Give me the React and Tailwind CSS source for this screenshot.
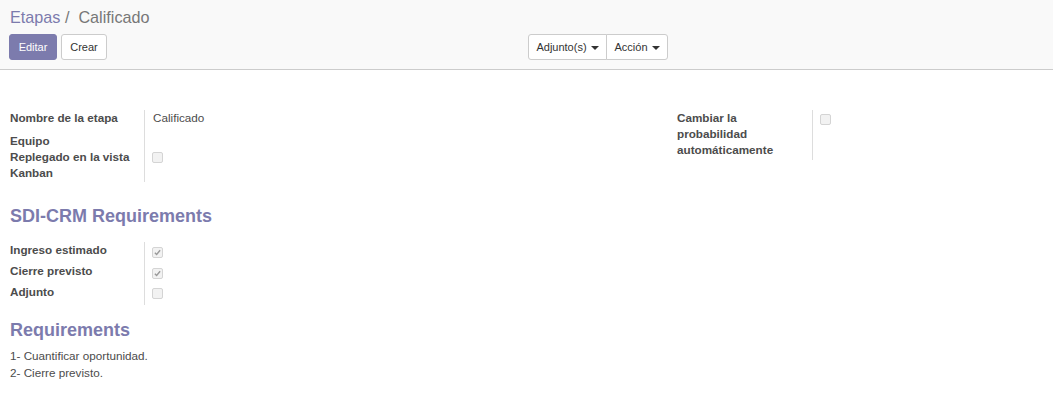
import React from "react";

const font = { fontFamily: '"Liberation Sans", Arial, sans-serif' };

function Check({ checked }) {
  return (
    <span className="inline-flex items-center justify-center w-[11px] h-[11px] rounded-[2px] border border-[#d4d4d4] bg-[#f2f2f2]">
      {checked && (
        <svg width="7" height="7" viewBox="0 0 8 8">
          <path d="M1 4.2 L3 6.2 L7 1.5" fill="none" stroke="#9a9a9a" strokeWidth="1.6" />
        </svg>
      )}
    </span>
  );
}

function Caret() {
  return <span className="inline-block ml-[4px] align-middle border-t-[4px] border-t-current border-x-[4px] border-x-transparent" />;
}

export default function App() {
  return (
    <div className="min-h-screen bg-white text-[#4c4c4c] text-[11.7px]" style={font}>
      {/* control panel */}
      <div className="bg-[#f9f9f9] border-b border-[#cccccc] h-[70px] px-[10px] pt-[6px]">
        <div className="text-[16.2px] leading-[22px]">
          <span className="text-[#7c7bad]">Etapas</span>
          <span className="text-[#777777]"> /&nbsp; Calificado</span>
        </div>
        <div className="relative flex mt-[6px] h-[26px]">
          <button className="-ml-[1px] h-[26px] w-[48px] rounded-[3px] bg-[#7c7bad] text-white text-[11px] border border-[#7c7bad]">
            Editar
          </button>
          <button className="ml-[4px] h-[26px] w-[46px] rounded-[3px] bg-white text-[#333] text-[11px] border border-[#cccccc]">
            Crear
          </button>
          <div className="absolute left-[518px] top-0 flex">
            <button className="h-[26px] w-[79px] rounded-l-[3px] bg-white text-[#333] text-[11px] border border-[#cccccc]">
              Adjunto(s)<Caret />
            </button>
            <button className="h-[26px] w-[62px] -ml-[1px] rounded-r-[3px] bg-white text-[#333] text-[11px] border border-[#cccccc]">
              Acción<Caret />
            </button>
          </div>
        </div>
      </div>

      {/* form */}
      <div className="px-[10px] pt-[40px]">
        <div className="flex">
          <div className="w-[667px] grid grid-cols-[134px_1fr] leading-[16px]">
            <div className="font-bold h-[23px] pr-[10px]">Nombre de la etapa</div>
            <div className="border-l border-[#dddddd] pl-[8px]">Calificado</div>
            <div className="font-bold h-[16px] pr-[10px]">Equipo</div>
            <div className="border-l border-[#dddddd] pl-[8px]" />
            <div className="font-bold pb-[1px] pr-[10px]">Replegado en la vista Kanban</div>
            <div className="border-l border-[#dddddd] pl-[7px] pt-[3px] leading-none">
              <Check />
            </div>
          </div>
          <div className="w-[156px] grid grid-cols-[135px_1fr] leading-[16px] content-start">
            <div className="font-bold pb-[2px] pr-[10px]">Cambiar la probabilidad automáticamente</div>
            <div className="border-l border-[#dddddd] pl-[7px] pt-[4px] leading-none">
              <Check />
            </div>
          </div>
        </div>

        <h2 className="mt-[23px] text-[18px] leading-[22px] font-bold text-[#7c7bad]">SDI-CRM Requirements</h2>

        <div className="mt-[15px] w-[300px] grid grid-cols-[134px_1fr]">
          {[
            ["Ingreso estimado", true],
            ["Cierre previsto", true],
            ["Adjunto", false],
          ].map(([label, checked]) => (
            <React.Fragment key={label}>
              <div className="font-bold h-[21px] leading-[16px]">{label}</div>
              <div className="border-l border-[#dddddd] pl-[7px] pt-[4px] leading-none">
                <Check checked={checked} />
              </div>
            </React.Fragment>
          ))}
        </div>

        <h2 className="mt-[14px] text-[18px] leading-[22px] font-bold text-[#7c7bad]">Requirements</h2>
        <div className="mt-[6px] leading-[17px]">
          <div>1- Cuantificar oportunidad.</div>
          <div>2- Cierre previsto.</div>
        </div>
      </div>
    </div>
  );
}
